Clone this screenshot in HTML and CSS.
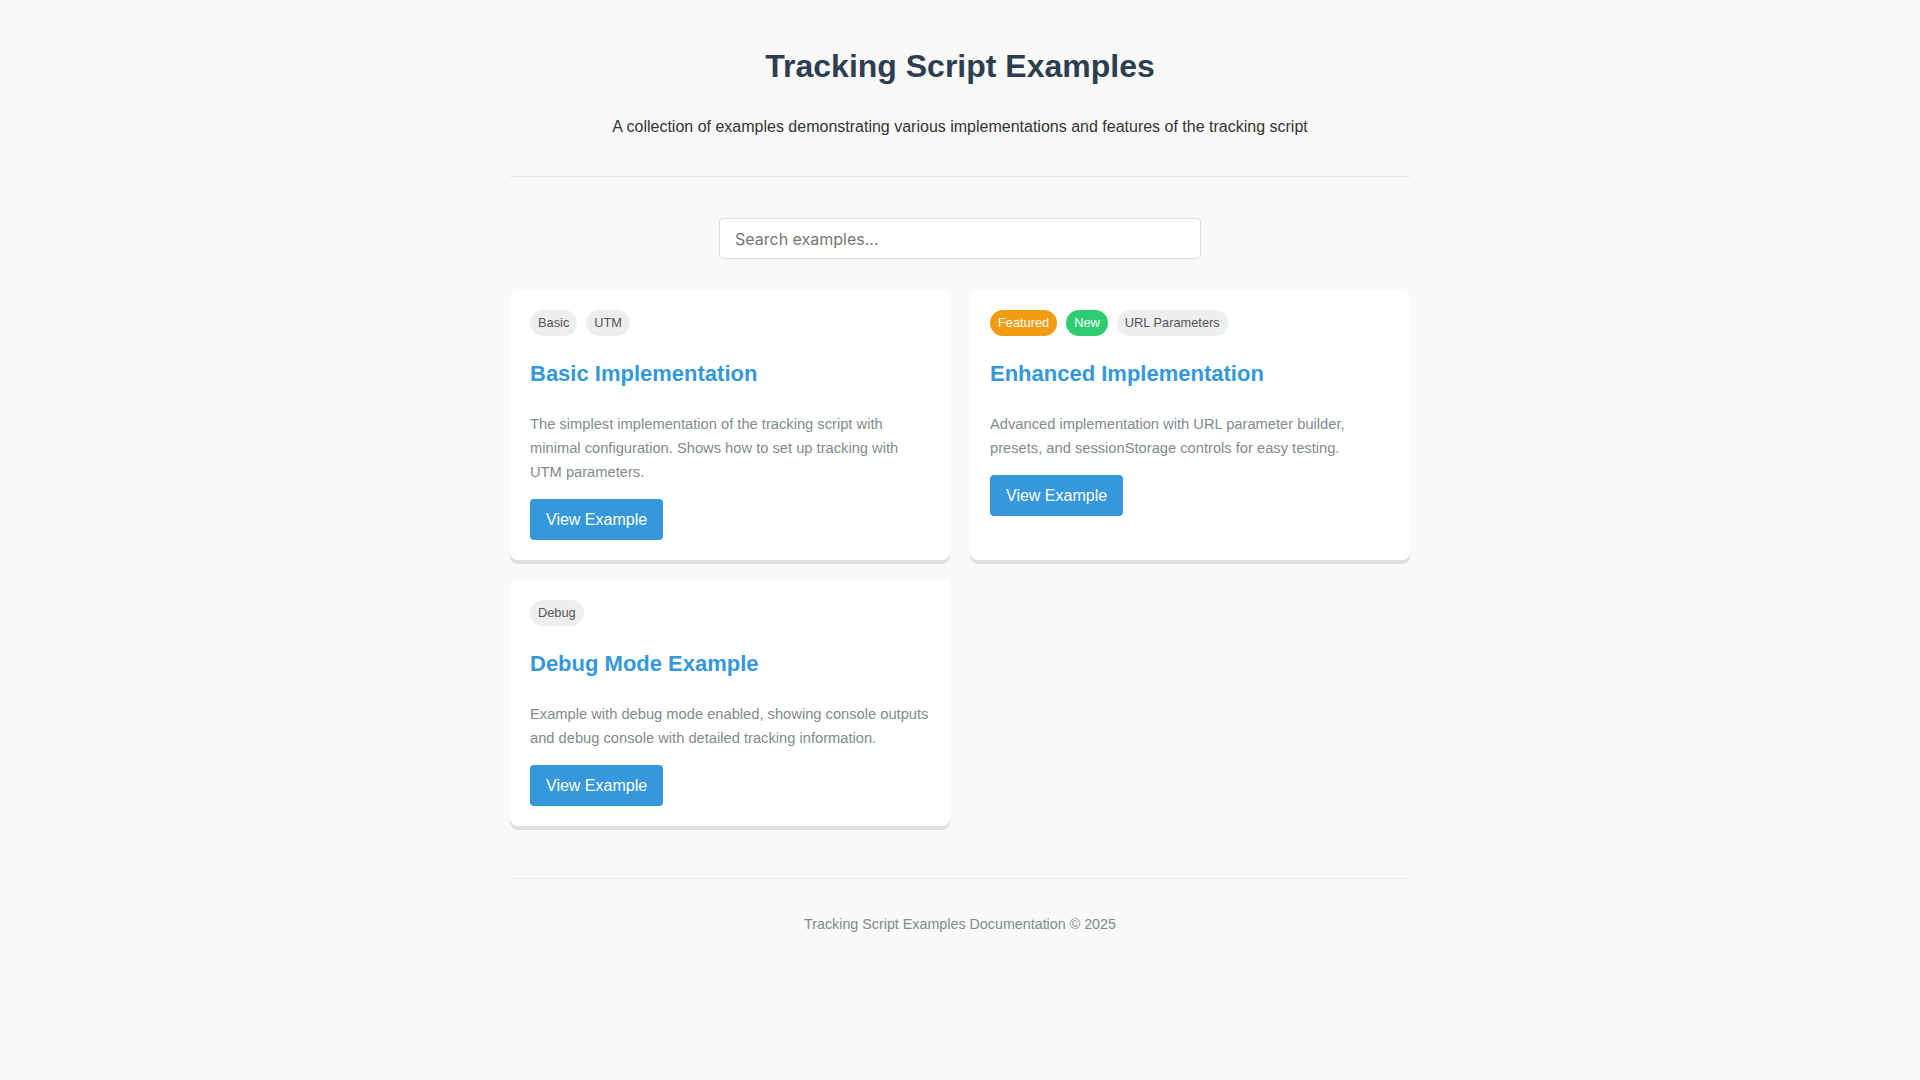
FILE: index.html
```html
<!DOCTYPE html>
<html lang="en">
<head>
<meta charset="utf-8">
<title>Tracking Script Examples</title>
<link rel="stylesheet" href="styles.css">
</head>
<body>
<div class="page">
  <header class="header">
    <h1 class="title">Tracking Script Examples</h1>
    <p class="subtitle">A collection of examples demonstrating various implementations and features of the tracking script</p>
  </header>

  <div class="search">
    <input class="search-input" type="text" placeholder="Search examples...">
  </div>

  <main class="grid">
    <article class="card">
      <div class="tags">
        <span class="tag">Basic</span>
        <span class="tag">UTM</span>
      </div>
      <h2 class="card-title">Basic Implementation</h2>
      <p class="card-desc">The simplest implementation of the tracking script with minimal configuration. Shows how to set up tracking with UTM parameters.</p>
      <a class="btn" href="#">View Example</a>
    </article>

    <article class="card">
      <div class="tags">
        <span class="tag tag-featured">Featured</span>
        <span class="tag tag-new">New</span>
        <span class="tag">URL Parameters</span>
      </div>
      <h2 class="card-title">Enhanced Implementation</h2>
      <p class="card-desc">Advanced implementation with URL parameter builder, presets, and sessionStorage controls for easy testing.</p>
      <a class="btn" href="#">View Example</a>
    </article>

    <article class="card">
      <div class="tags">
        <span class="tag">Debug</span>
      </div>
      <h2 class="card-title">Debug Mode Example</h2>
      <p class="card-desc">Example with debug mode enabled, showing console outputs and debug console with detailed tracking information.</p>
      <a class="btn" href="#">View Example</a>
    </article>
  </main>

  <footer class="footer">
    <p class="footer-text">Tracking Script Examples Documentation © 2025</p>
  </footer>
</div>
</body>
</html>
```

FILE: styles.css
```css
* {
  box-sizing: border-box;
}

html, body {
  margin: 0;
  padding: 0;
}

body {
  background: #f9f9f9;
  font-family: "Liberation Sans", Arial, sans-serif;
  font-size: 16px;
  color: #333;
}

.page {
  max-width: 900px;
  margin: 0 auto;
  padding-top: 48px;
  padding-bottom: 40px;
}

.header {
  text-align: center;
  padding-bottom: 40px;
  border-bottom: 1px solid #e8e8e8;
}

.title {
  margin: 0;
  font-size: 32px;
  font-weight: bold;
  color: #2c3e50;
}

.subtitle {
  margin: 33px 0 0;
  font-size: 16px;
  color: #333;
}

.search {
  margin-top: 41px;
  display: flex;
  justify-content: center;
}

.search-input {
  width: 482px;
  height: 41px;
  padding: 0 15px;
  border: 1px solid #ddd;
  border-radius: 4px;
  background: #fff;
  font-family: Inter, "Noto Sans", sans-serif;
  font-size: 16px;
  color: #333;
  outline: none;
}

.search-input::placeholder {
  color: #757575;
}

.grid {
  margin-top: 31px;
  display: grid;
  grid-template-columns: 1fr 1fr;
  gap: 20px;
}

.card {
  background: #fff;
  border-radius: 8px;
  padding: 20px;
  box-shadow: 0 4px 0 #e0e0e0;
}

.tags {
  display: flex;
  flex-wrap: wrap;
  gap: 9px;
  margin-bottom: 25px;
}

.tag {
  display: inline-block;
  padding: 5px 8px;
  line-height: 16px;
  font-size: 12.8px;
  border-radius: 13px;
  background: #eeeeee;
  color: #555;
}

.tag-featured {
  background: #f39c12;
  color: #fff;
}

.tag-new {
  background: #2ecc71;
  color: #fff;
}

.card-title {
  margin: 0 0 25px;
  font-size: 22px;
  font-weight: bold;
  color: #3498db;
}

.card-desc {
  margin: 0 0 15px;
  font-size: 14.7px;
  line-height: 24px;
  color: #7f8c8d;
}

.btn {
  display: inline-block;
  padding: 11px 16px;
  line-height: 19px;
  font-size: 16px;
  color: #fff;
  background: #3498db;
  border-radius: 4px;
  text-decoration: none;
}

.footer {
  margin-top: 52px;
  padding-top: 37px;
  border-top: 1px solid #e8e8e8;
  text-align: center;
}

.footer-text {
  margin: 0;
  font-size: 14.3px;
  line-height: 16px;
  color: #7f8c8d;
}
```
